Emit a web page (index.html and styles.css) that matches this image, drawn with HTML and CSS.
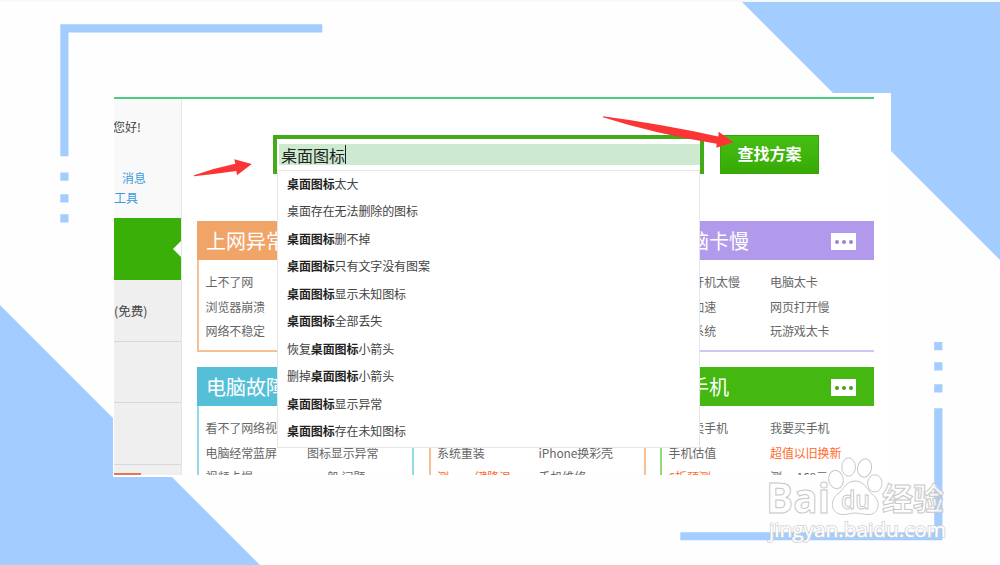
FILE: index.html
```html
<!DOCTYPE html>
<html lang="zh-CN">
<head>
    <meta charset="UTF-8">
    <meta name="viewport" content="width=device-width, initial-scale=1.0">
    <title>查找方案</title>
    <link rel="stylesheet" href="styles.css">
</head>
<body>
<div class="slide">
    <!-- 背景装饰 -->
    <svg class="decor" viewBox="0 0 1000 565" fill="#a3ccff">
        <path d="M742 2H1000V260Z"/>
        <path d="M0 305L260 565H0Z"/>
        <path d="M60.3 24.3H322.3V32.5H68.5V156.3H60.3Z"/>
        <path d="M60.3 172.5h8.2v8.2h-8.2zM60.3 194.3h8.2v8.2h-8.2zM60.3 214.3h8.2v8.2h-8.2z"/>
        <path d="M934.2 342h8.2v8.2h-8.2zM934.2 362.3h8.2v8.2h-8.2zM934.2 384.3h8.2v8.2h-8.2z"/>
        <path d="M934.2 408.3h8.2V540.3H680.3V532.2H934.2Z"/>
    </svg>

    <div class="panel">
        <div class="page">
            <div class="sidebar">
                <div class="user">
                    <p class="hello">您好!</p>
                    <p class="message">消息</p>
                    <p class="tool">工具</p>
                </div>
                <div class="menu active"></div>
                <div class="menu">(免费)</div>
                <div class="menu"></div>
                <div class="menu"></div>
                <div class="menu last"><span class="bar"></span></div>
            </div>

            <div class="main">
                <div class="search">
                    <div class="search-box">
                        <div class="input">桌面图标<span class="caret"></span></div>
                        <ul class="suggest">
                            <li><b>桌面图标</b>太大</li>
                            <li>桌面存在无法删除的图标</li>
                            <li><b>桌面图标</b>删不掉</li>
                            <li><b>桌面图标</b>只有文字没有图案</li>
                            <li><b>桌面图标</b>显示未知图标</li>
                            <li><b>桌面图标</b>全部丢失</li>
                            <li>恢复<b>桌面图标</b>小箭头</li>
                            <li>删掉<b>桌面图标</b>小箭头</li>
                            <li><b>桌面图标</b>显示异常</li>
                            <li><b>桌面图标</b>存在未知图标</li>
                        </ul>
                    </div>
                    <button class="btn">查找方案</button>
                </div>

                <div class="cards">
                    <div class="card orange">
                        <h3>上网异常</h3>
                        <ul>
                            <li>上不了网</li><li></li>
                            <li>浏览器崩溃</li><li></li>
                            <li>网络不稳定</li><li></li>
                        </ul>
                    </div>
                    <div class="card"></div>
                    <div class="card purple">
                        <h3>电脑卡慢<span class="more"><i></i><i></i><i></i></span></h3>
                        <ul>
                            <li>电脑开机太慢</li><li>电脑太卡</li>
                            <li>开机加速</li><li>网页打开慢</li>
                            <li>重装系统</li><li>玩游戏太卡</li>
                        </ul>
                    </div>
                    <div class="card blue">
                        <h3>电脑故障</h3>
                        <ul>
                            <li>看不了网络视频</li><li></li>
                            <li>电脑经常蓝屏</li><li>图标显示异常</li>
                            <li>视频卡慢</li><li class="indent">一般 问题</li>
                        </ul>
                    </div>
                    <div class="card orange">
                        <h3></h3>
                        <ul>
                            <li></li><li></li>
                            <li>系统重装</li><li>iPhone换彩壳</li>
                            <li class="hot">测一 一键降温</li><li>手机维修</li>
                        </ul>
                    </div>
                    <div class="card green">
                        <h3>二手机<span class="more"><i></i><i></i><i></i></span></h3>
                        <ul>
                            <li>我要卖手机</li><li>我要买手机</li>
                            <li>手机估值</li><li class="hot">超值以旧换新</li>
                            <li class="hot">6折预测</li><li>测一 168元</li>
                        </ul>
                    </div>
                </div>
            </div>
        </div>
    </div>

    <!-- 箭头和水印 -->
    <svg class="overlay" viewBox="0 0 1000 565">
        <g fill="#fb3535">
            <path d="M194 175.2Q215 168 235.3 163.8L234.3 159.3L251.8 164L237 175.3L236.3 171Q215 174 194 176.3Z"/>
            <path d="M603 116.2Q662 124 718.3 136.5L718.7 131.8L733.5 142.3L716.3 147.8L716.6 143.8Q655 134 603 117.3Z"/>
        </g>
        <g class="mark">
            <text x="766" y="513" font-size="41" textLength="64" lengthAdjust="spacingAndGlyphs">Bai</text>
            <path d="M855 481C864 481 867 489 872 494C882 501 879 515 868 514.5C863 514.5 860 513 855 513C850 513 847 515 842 514.5C831 514 829 500 838 494C844 489 846 481 855 481Z"/>
            <ellipse cx="848.6" cy="467" rx="6.8" ry="9.2"/>
            <ellipse cx="864.6" cy="468" rx="7" ry="9.2" transform="rotate(12 864.6 468)"/>
            <ellipse cx="836" cy="479.5" rx="7.3" ry="9.2" transform="rotate(-12 836 479.5)"/>
            <ellipse cx="874.8" cy="483.3" rx="7.2" ry="8.6"/>
            <text class="du" x="841" y="509" font-size="25" textLength="29" lengthAdjust="spacingAndGlyphs">du</text>
            <text class="cn" x="882" y="510" font-size="31" textLength="62">经验</text>
            <text class="url" x="769" y="537" font-size="20" textLength="177" lengthAdjust="spacingAndGlyphs">jingyan.baidu.com</text>
        </g>
    </svg>
</div>
</body>
</html>
```
FILE: styles.css
```css
body {
    margin: 0;
    font-family: "Noto Sans CJK SC", sans-serif;
    font-size: 12px;
    color: #666;
    background-color: #fefefe;
}

ul, p, h3 {
    margin: 0;
    padding: 0;
    list-style: none;
}

.slide {
    position: relative;
    width: 1000px;
    height: 565px;
    box-sizing: border-box;
    border-top: 2px solid #f5f8fd;
    padding: 91px 0 0 113px;
    overflow: hidden;
}

.decor, .overlay {
    position: absolute;
    left: 0;
    top: -2px;
    width: 1000px;
    height: 565px;
}

.panel {
    position: relative;
    width: 778px;
    height: 384px;
    box-sizing: border-box;
    padding: 4px 17px 2px 1px;
    background-color: #fff;
}

.page {
    display: flex;
    height: 378px;
    box-sizing: border-box;
    border-top: 2px solid #4fcb80;
    overflow: hidden;
}

/* 左侧栏 */
.sidebar {
    width: 67px;
    flex: none;
    border-right: 1px solid #e6e6e6;
    background-color: #efefef;
    color: #444;
}

.user {
    height: 119px;
    box-sizing: border-box;
    padding-top: 18px;
    background-color: #f9f9f9;
    line-height: 20px;
}

.hello {
    margin: 0 0 31px -1px;
}

.message {
    padding-left: 8px;
    color: #3a9be0;
}

.tool {
    color: #3a9be0;
}

.menu {
    height: 61.5px;
    box-sizing: border-box;
    border-bottom: 1px solid #d8d8d8;
    line-height: 62px;
    font-size: 12.5px;
}

.active {
    position: relative;
    height: 62px;
    border: 0;
    background-color: #3aaf07;
}

.active::after {
    content: "";
    position: absolute;
    right: 0;
    top: 23px;
    border: 8px solid transparent;
    border-right-color: #fff;
    border-left: 0;
}

.last {
    display: flex;
    height: 10.5px;
    border: 0;
    align-items: flex-end;
}

.bar {
    width: 27px;
    height: 2px;
    background-color: #e07a4e;
}

/* 搜索 */
.main {
    flex: none;
    width: 695px;
    padding-left: 15px;
}

.search {
    display: flex;
    gap: 16px;
    padding: 36px 0 47px 76px;
}

.search-box {
    position: relative;
    width: 431px;
    height: 39px;
    box-sizing: border-box;
    border: 4px solid #42ab17;
    border-bottom: 0;
    padding: 5px 0 0 2px;
}

.input {
    display: flex;
    align-items: center;
    height: 21px;
    padding-left: 2px;
    background-color: #cde9d0;
    color: #222;
    font-size: 16px;
    line-height: 20px;
}

.caret {
    width: 1px;
    height: 19px;
    background-color: #222;
}

.suggest {
    position: absolute;
    left: 0;
    top: 31px;
    width: 423px;
    height: 278px;
    box-sizing: border-box;
    border: 1px solid #e6e6e6;
    padding-left: 9px;
    background-color: #fff;
    color: #444;
}

.suggest li {
    height: 27.45px;
    line-height: 26.5px;
    letter-spacing: -0.1px;
}

.suggest b {
    color: #222;
}

.btn {
    width: 99px;
    height: 39px;
    border: 1px solid #38a40a;
    padding: 0 0 3px;
    background: linear-gradient(#46bf14, #37a906);
    color: #fff;
    font: bold 16px "Noto Sans CJK SC", sans-serif;
}

/* 分类卡片 */
.cards {
    display: grid;
    grid-template-columns: 217px 217px 217px;
    gap: 15px 14.5px;
}

.card {
    height: 131px;
    box-sizing: border-box;
}

.card h3 {
    display: flex;
    height: 39px;
    align-items: center;
    justify-content: space-between;
    padding: 0 21px 0 9px;
    color: #fff;
    font-size: 20px;
    font-weight: normal;
    line-height: 39px;
}

.card ul {
    display: grid;
    grid-template-columns: 101.5px 1fr;
    grid-auto-rows: 24.5px;
    height: 92px;
    box-sizing: border-box;
    padding: 10px 0 0 6.5px;
    border: 1px solid;
    border-width: 0 2px 2px;
    line-height: 24.5px;
    white-space: nowrap;
    letter-spacing: -0.1px;
}

.orange h3 { background-color: #f0a468; }
.orange ul { border-color: #f6bf94; }
.purple h3 { background-color: #b19aec; }
.purple ul { border-color: #d0c5f3; }
.blue h3 { background-color: #56bfd8; }
.blue ul { border-color: #95d9e8; }
.green h3 { background-color: #44b711; }
.green ul { border-color: #8edc72; }

.more {
    display: flex;
    width: 25px;
    height: 17px;
    margin-top: 2px;
    align-items: center;
    justify-content: center;
    gap: 3px;
    background-color: #fff;
}

.more i {
    width: 4px;
    height: 4px;
    border-radius: 50%;
    background-color: #9a85cf;
}

.green .more i {
    background-color: #44a01c;
}

.hot {
    color: #ff6a2b;
}

.indent {
    padding-left: 8px;
}

/* 水印 */
.mark {
    fill: #fff;
    fill-opacity: .8;
    stroke: #c8c8c8;
    stroke-width: 1;
    font-family: "Open Sans", "Noto Sans", sans-serif;
    font-weight: bold;
}

.mark .du {
    font-weight: 600;
}

.mark .cn {
    font-family: "Noto Sans CJK SC", sans-serif;
}

.mark .url {
    fill-opacity: 1;
    font-weight: 400;
    stroke: #d2d2d2;
    stroke-width: 1.6;
    paint-order: stroke;
}
```
